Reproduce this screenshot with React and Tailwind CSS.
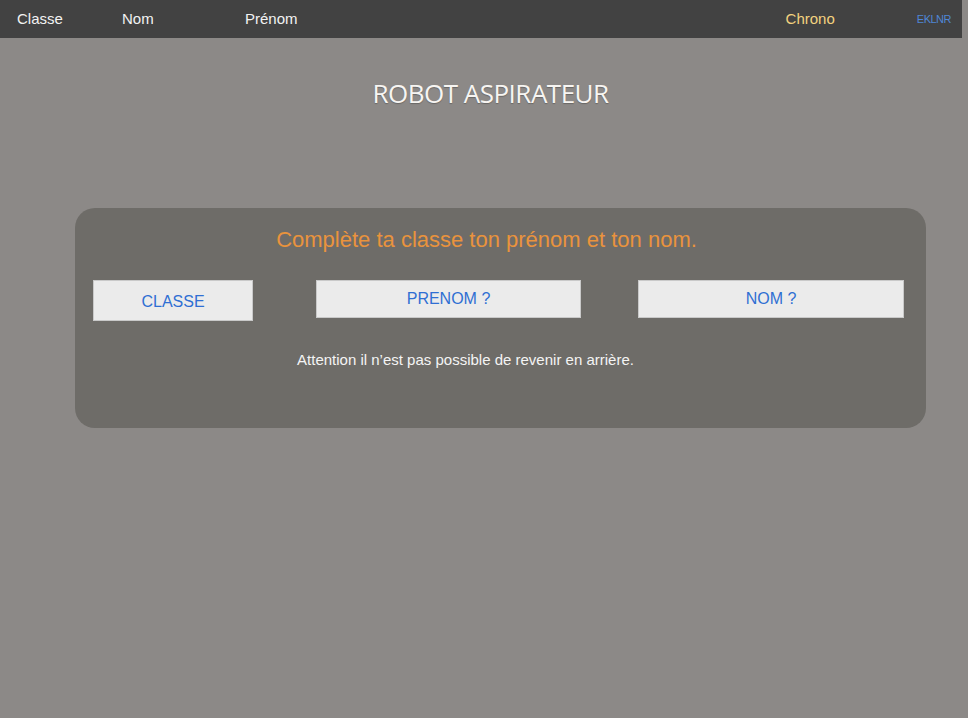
import React from "react";

const sans = "font-['Liberation_Sans',Arial,sans-serif]";

function TopBar() {
  return (
    <div className={`flex items-center w-[962px] h-[38px] bg-[#424242] text-[15px] ${sans}`}>
      <span className="ml-[17px] w-[105px] text-[#f2f2f2]">Classe</span>
      <span className="w-[123px] text-[#f2f2f2]">Nom</span>
      <span className="text-[#f2f2f2]">Prénom</span>
      <span className="ml-auto mr-[82px] text-[#f3d27f]">Chrono</span>
      <span className="mr-[11px] text-[11px] tracking-[-0.5px] text-[#4f86d6]">EKLNR</span>
    </div>
  );
}

function ChoiceButton({ label, className = "" }) {
  return (
    <button
      type="button"
      className={`flex items-center justify-center bg-[#ebebeb] border border-[#c9c9c9] text-[#2f6fd3] text-[16px] ${sans} ${className}`}
    >
      {label}
    </button>
  );
}

export default function App() {
  return (
    <div className="min-h-[718px] bg-[#8c8987] overflow-hidden">
      <TopBar />

      <h1 className="mt-[39px] pl-[13px] text-center text-[26px] leading-[32px] text-[#f7f5f2] font-['Open_Sans',sans-serif] tracking-[-0.5px] [text-shadow:0_1px_1px_rgba(0,0,0,0.25)]">
        ROBOT ASPIRATEUR
      </h1>

      <div className="ml-[75px] mt-[99px] w-[851px] h-[220px] rounded-[20px] bg-[#6e6c68] pt-[18px]">
        <p className={`text-center text-[22px] leading-[27px] text-[#e9933d] pr-[28px] ${sans}`}>
          Complète ta classe ton prénom et ton nom.
        </p>

        <div className="flex items-start mt-[27px] pl-[18px]">
          <ChoiceButton label="CLASSE" className="w-[160px] h-[41px] pt-[2px]" />
          <ChoiceButton label="PRENOM ?" className="ml-[63px] w-[265px] h-[38px]" />
          <ChoiceButton label="NOM ?" className="ml-[57px] w-[266px] h-[38px]" />
        </div>

        <p className={`mt-[30px] text-center text-[15px] leading-[18px] text-[#f4f4f4] pr-[70px] ${sans}`}>
          Attention il n’est pas possible de revenir en arrière.
        </p>
      </div>
    </div>
  );
}
